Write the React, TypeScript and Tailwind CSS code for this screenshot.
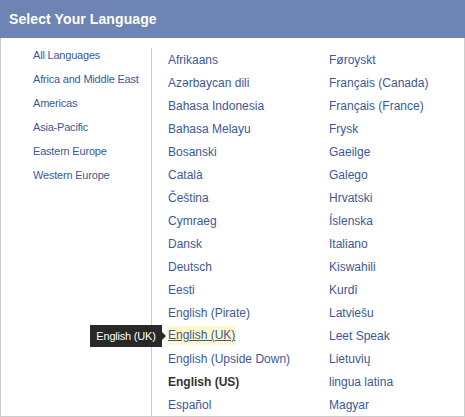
import React from "react";

const regions = [
  "All Languages",
  "Africa and Middle East",
  "Americas",
  "Asia-Pacific",
  "Eastern Europe",
  "Western Europe",
];

const col1 = [
  "Afrikaans",
  "Azərbaycan dili",
  "Bahasa Indonesia",
  "Bahasa Melayu",
  "Bosanski",
  "Català",
  "Čeština",
  "Cymraeg",
  "Dansk",
  "Deutsch",
  "Eesti",
  "English (Pirate)",
  "English (UK)",
  "English (Upside Down)",
  "English (US)",
  "Español",
];

const col2 = [
  "Føroyskt",
  "Français (Canada)",
  "Français (France)",
  "Frysk",
  "Gaeilge",
  "Galego",
  "Hrvatski",
  "Íslenska",
  "Italiano",
  "Kiswahili",
  "Kurdî",
  "Latviešu",
  "Leet Speak",
  "Lietuvių",
  "lingua latina",
  "Magyar",
];

function Item({ name }: { name: string }) {
  if (name === "English (US)") {
    return (
      <div className="h-[23px] flex items-center text-[12px] font-bold text-[#333333]">
        {name}
      </div>
    );
  }
  if (name === "English (UK)") {
    return (
      <div className="h-[23px] flex items-center relative">
        <span className="text-[12px] text-[#3b5998] underline bg-[#fff6cc] px-[1px] -ml-[1px] leading-[19px]">
          {name}
        </span>
        <div className="absolute left-[-78px] top-[1px] flex items-center">
          <div className="bg-[#282828] text-white text-[11px] h-[22px] w-[72px] flex items-center justify-center whitespace-nowrap tracking-[-0.2px]">
            English (UK)
          </div>
          <div className="w-0 h-0 border-y-[4px] border-y-transparent border-l-[4px] border-l-[#282828]" />
        </div>
      </div>
    );
  }
  return (
    <div className="h-[23px] flex items-center text-[12px] text-[#3b5998]">
      {name}
    </div>
  );
}

export default function App() {
  return (
    <div
      className="w-[465px] h-[417px] flex flex-col bg-white overflow-hidden"
      style={{ fontFamily: '"Liberation Sans", Arial, sans-serif' }}
    >
      <div className="h-[38px] bg-[#6d84b4] shrink-0 flex items-center pl-[9px] pr-[1px]">
        <span className="text-white font-bold text-[14px] tracking-[0.1px]">Select Your Language</span>
      </div>
      <div className="flex-1 flex border-l border-r border-b border-[#cccccc]">
        <div className="w-[150px] shrink-0 pl-[32px] pt-[5px]">
          {regions.map((r) => (
            <div key={r} className="h-[24px] flex items-center text-[11px] text-[#3b5998] whitespace-nowrap tracking-[-0.2px]">
              {r}
            </div>
          ))}
        </div>
        <div className="flex-1 mt-[10px] border-l border-[#cccccc] flex pl-[16px]">
          <div className="w-[161px] shrink-0">
            {col1.map((n) => (
              <Item key={n} name={n} />
            ))}
          </div>
          <div className="flex-1">
            {col2.map((n) => (
              <Item key={n} name={n} />
            ))}
          </div>
        </div>
      </div>
    </div>
  );
}
